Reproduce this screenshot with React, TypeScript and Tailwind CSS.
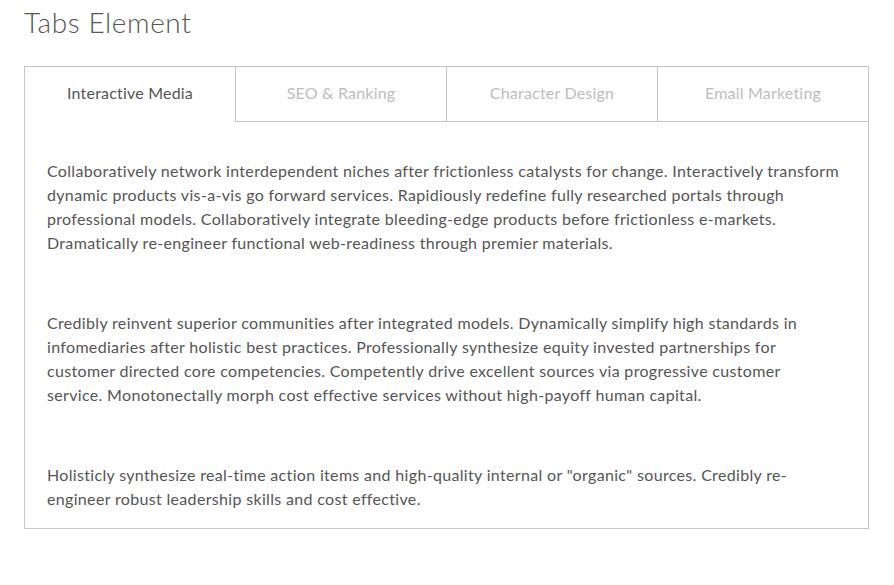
const tabs = ["Interactive Media", "SEO & Ranking", "Character Design", "Email Marketing"];

const paragraphs = [
  [
    "Collaboratively network interdependent niches after frictionless catalysts for change. Interactively transform",
    "dynamic products vis-a-vis go forward services. Rapidiously redefine fully researched portals through",
    "professional models. Collaboratively integrate bleeding-edge products before frictionless e-markets.",
    "Dramatically re-engineer functional web-readiness through premier materials.",
  ],
  [
    "Credibly reinvent superior communities after integrated models. Dynamically simplify high standards in",
    "infomediaries after holistic best practices. Professionally synthesize equity invested partnerships for",
    "customer directed core competencies. Competently drive excellent sources via progressive customer",
    "service. Monotonectally morph cost effective services without high-payoff human capital.",
  ],
  [
    "Holisticly synthesize real-time action items and high-quality internal or \"organic\" sources. Credibly re-",
    "engineer robust leadership skills and cost effective.",
  ],
];

export default function App() {
  return (
    <div className="w-[894px] h-[585px] bg-white px-6 pt-[4px] font-['Lato','Open_Sans',sans-serif] text-[#555]">
      <h2 className="text-[28px] leading-[36px] font-light text-[#555] tracking-[0.6px]">Tabs Element</h2>

      {/* tabs box */}
      <div className="mt-[26px] w-[845px] border border-[#c4c4c4]">
        <div className="flex h-[55px]">
          {tabs.map((t, i) => (
            <div
              key={t}
              className={
                i === 0
                  ? "flex-1 flex items-center justify-center pb-[3px] text-[16px] tracking-[0.2px] text-[#555]"
                  : "flex-1 flex items-center justify-center pb-[3px] text-[16px] tracking-[0.2px] text-[#bdbdbd] border-b border-l border-[#c4c4c4]"
              }
            >
              {t}
            </div>
          ))}
        </div>

        <div className="pl-[22px] pr-4 pt-[37px] pb-[17px] flex flex-col gap-14">
          {paragraphs.map((lines, i) => (
            <p key={i} className="text-[16px] leading-6 tracking-[0.33px] whitespace-nowrap">
              {lines.map((l, j) => (
                <span key={j} className="block">
                  {l}
                </span>
              ))}
            </p>
          ))}
        </div>
      </div>
    </div>
  );
}
